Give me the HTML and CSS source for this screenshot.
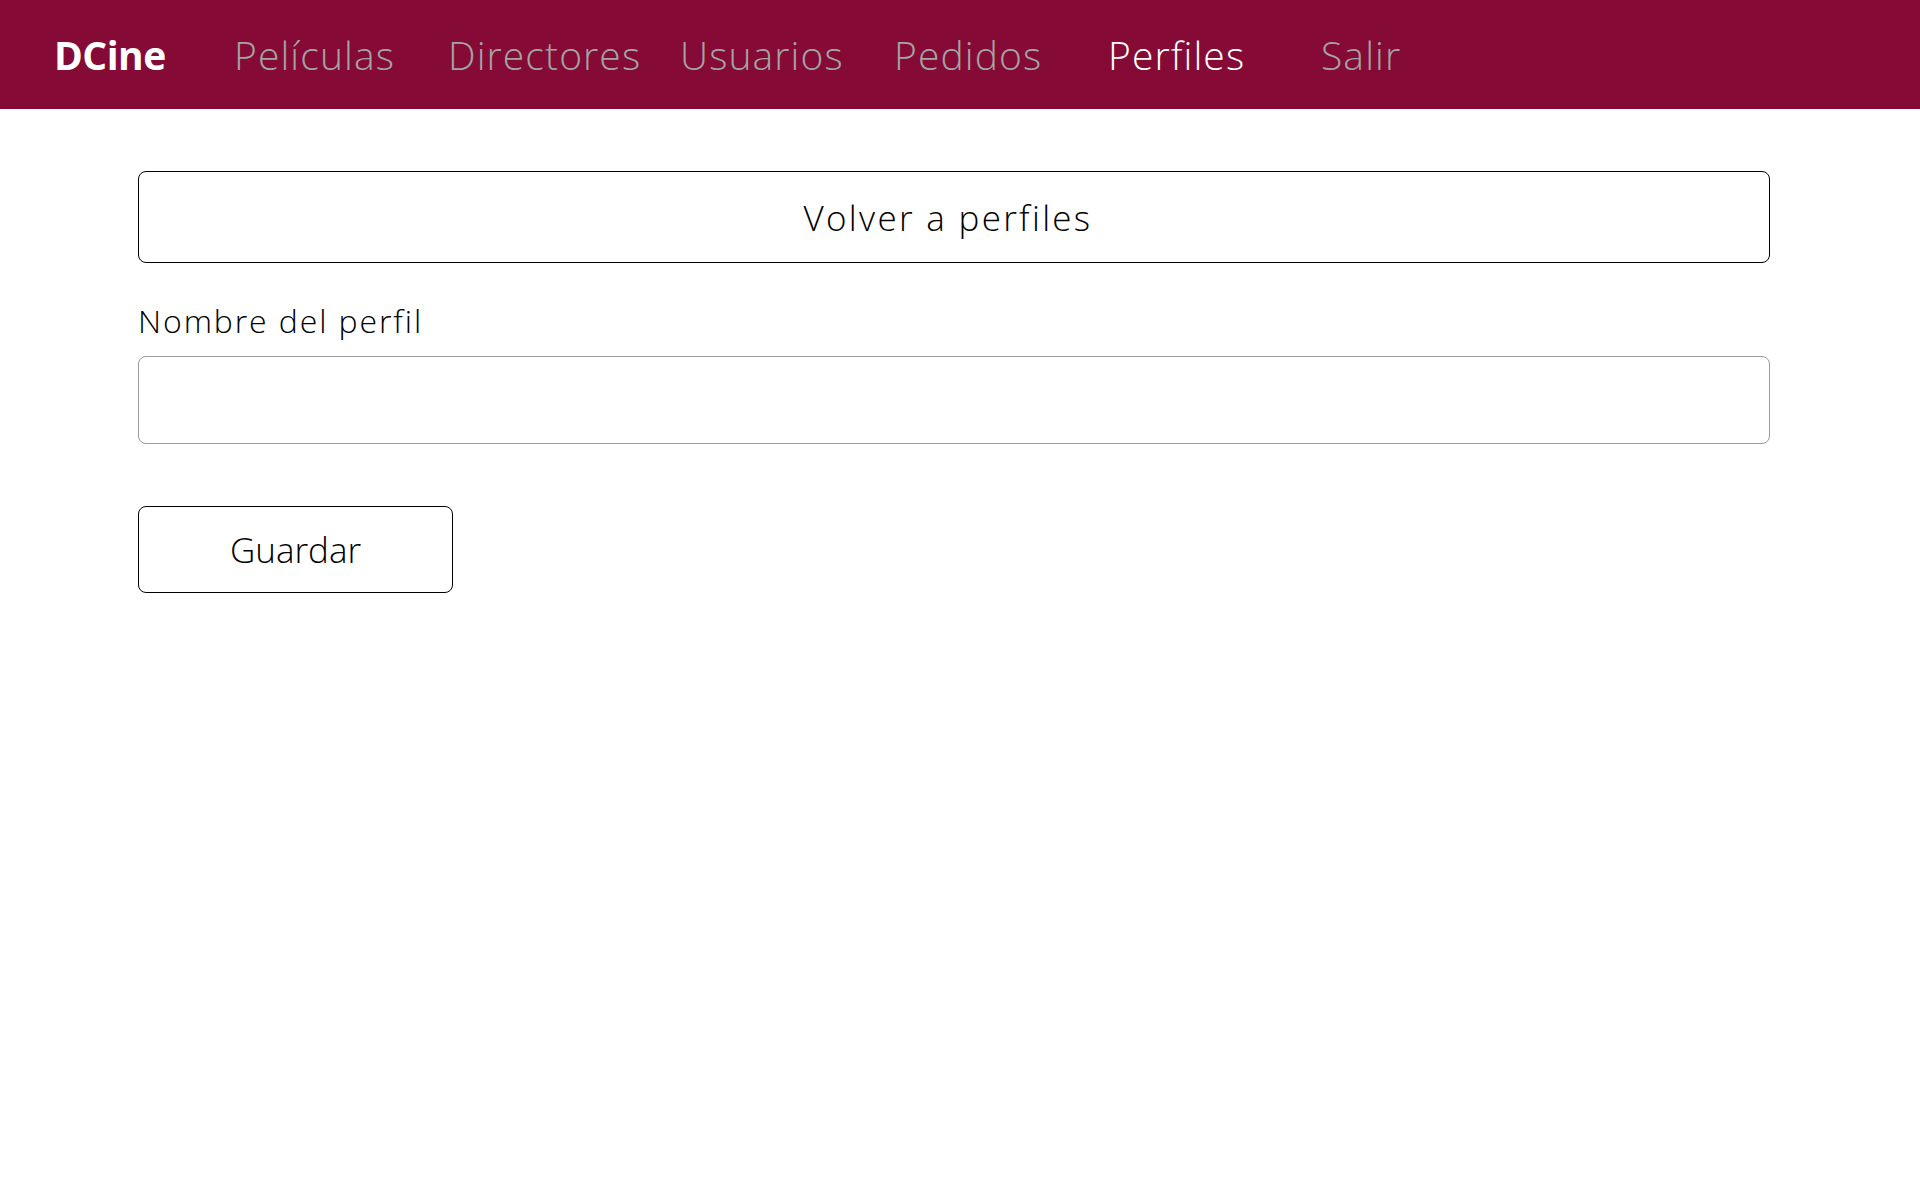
FILE: index.html
```html
<!DOCTYPE html>
<html lang="es">
<head>
<meta charset="utf-8">
<title>DCine - Perfiles</title>
<link rel="stylesheet" href="styles.css">
</head>
<body>
<nav class="navbar">
  <a class="brand" href="#">DCine</a>
  <ul class="nav">
    <li class="nav-item i1"><a href="#">Películas</a></li>
    <li class="nav-item i2"><a href="#">Directores</a></li>
    <li class="nav-item i3"><a href="#">Usuarios</a></li>
    <li class="nav-item i4"><a href="#">Pedidos</a></li>
    <li class="nav-item i5 active"><a href="#">Perfiles</a></li>
    <li class="nav-item i6"><a href="#">Salir</a></li>
  </ul>
</nav>
<main class="container">
  <a class="btn btn-back" href="#">Volver a perfiles</a>
  <form class="form">
    <label class="label" for="nombre">Nombre del perfil</label>
    <input class="input" id="nombre" type="text">
    <button class="btn btn-save" type="button">Guardar</button>
  </form>
</main>
</body>
</html>
```

FILE: styles.css
```css
* { box-sizing: border-box; }
html, body { margin: 0; padding: 0; background: #fff; }
body { font-family: "Open Sans", "Lato", sans-serif; font-weight: 300; color: #000; }

.navbar {
  height: 109px;
  background: #850a35;
  display: flex;
  align-items: center;
  padding-left: 54px;
}
.brand {
  font-size: 39px;
  font-weight: 700;
  color: #fff;
  text-decoration: none;
  width: 180px;
  letter-spacing: -0.5px;
}
.nav {
  display: flex;
  list-style: none;
  margin: 0;
  padding: 0;
}
.nav-item a {
  font-size: 39px;
  font-weight: 300;
  letter-spacing: 1.1px;
  color: #a4a4a4;
  text-decoration: none;
}
.nav-item.active a { color: #fff; }
.i1 { width: 214px; }
.i2 { width: 232px; }
.i3 { width: 214px; }
.i4 { width: 214px; }
.i5 { width: 213px; }

.container {
  width: 1632px;
  margin-left: 138px;
  padding-top: 62px;
}
.btn {
  display: flex;
  align-items: center;
  justify-content: center;
  background: #fff;
  border: 1.5px solid #000;
  border-radius: 8px;
  color: #000;
  font-family: inherit;
  font-weight: 300;
  font-size: 35px;
  text-decoration: none;
}
.btn-back { height: 92px; width: 100%; letter-spacing: 2.3px; padding-right: 12px; }
.form { display: flex; flex-direction: column; }
.label {
  font-size: 32px;
  letter-spacing: 1.9px;
  margin-top: 38px;
  line-height: 40px;
  height: 55px;
}
.input {
  height: 88px;
  width: 100%;
  border: 1.5px solid #9c9c9c;
  border-radius: 8px;
  font-size: 32px;
  font-family: inherit;
  padding: 0 16px;
}
.btn-save {
  margin-top: 62px;
  width: 315px;
  height: 87px;
}
```
